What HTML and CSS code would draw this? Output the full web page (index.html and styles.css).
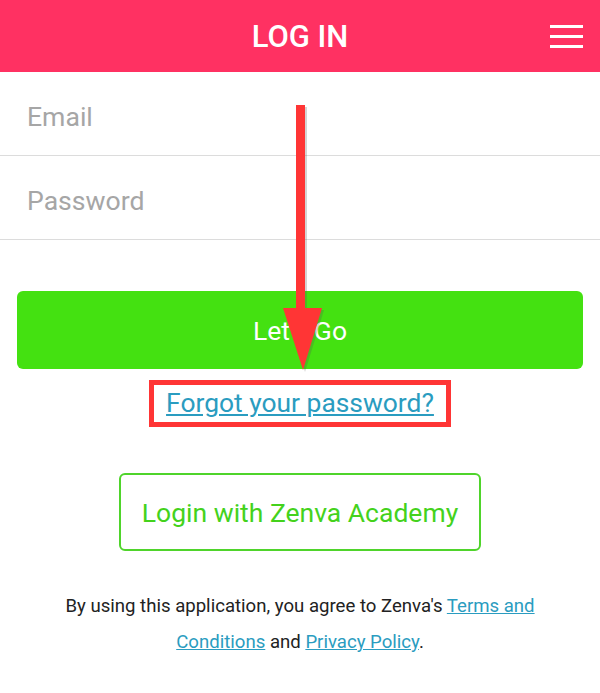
FILE: index.html
```html
<!DOCTYPE html>
<html lang="en">
<head>
  <meta charset="UTF-8" />
  <title>Log In</title>
  <link rel="stylesheet" href="styles.css">
</head>
<body>

<div id="topbar">
  <span></span>
  <h1>LOG IN</h1>
  <button class="menu" aria-label="menu">
    <svg width="33" height="23" viewBox="0 0 33 23">
      <rect x="0" y="0" width="33" height="3" fill="#fff"/>
      <rect x="0" y="10" width="33" height="3" fill="#fff"/>
      <rect x="0" y="20" width="33" height="3" fill="#fff"/>
    </svg>
  </button>
</div>

<form id="login">
  <input type="email" placeholder="Email">
  <input type="password" placeholder="Password">

  <button type="button" class="go">Let's Go</button>

  <div class="forgot">
    <a href="#">Forgot your password?</a>
  </div>

  <button type="button" class="zenva">Login with Zenva Academy</button>
</form>

<p class="terms">
  By using this application, you agree to Zenva's <a href="#">Terms and Conditions</a> and <a href="#">Privacy Policy</a>.
</p>

<!-- annotation arrow -->
<svg class="arrow" width="600" height="693" viewBox="0 0 600 693">
  <g opacity="0.25" transform="translate(2 2)">
    <rect x="296" y="105" width="9" height="210" fill="#555"/>
    <polygon points="283,308 322,308 303,370" fill="#555"/>
  </g>
  <rect x="296" y="105" width="9" height="210" fill="#ff3535"/>
  <polygon points="283,308 322,308 303,370" fill="#ff3535"/>
</svg>

</body>
</html>
```

FILE: styles.css
```css
body {
  margin: 0;
  font-family: Roboto, "Liberation Sans", sans-serif;
  background: #fff;
  color: #222;
  position: relative;
}

#topbar {
  background: #ff3162;
  height: 72px;
  display: grid;
  grid-template-columns: 1fr auto 1fr;
  align-items: center;
  padding: 0 17px;
}

#topbar h1 {
  margin: 0;
  color: #fff;
  font-size: 31px;
  font-weight: 500;
}

.menu {
  justify-self: end;
  border: none;
  background: none;
  padding: 0;
  display: flex;
  margin-top: 1px;
}

#login {
  display: flex;
  flex-direction: column;
  align-items: center;
}

#login input {
  width: 100%;
  box-sizing: border-box;
  height: 84px;
  border: none;
  border-bottom: 1px solid #dcdcdc;
  padding: 6px 27px 0;
  font-family: inherit;
  font-size: 26.6px;
  outline: none;
}

#login input::placeholder {
  color: #a6a6a6;
}

.go {
  margin-top: 51px;
  width: 566px;
  height: 78px;
  border: none;
  border-radius: 6px;
  background: #44e111;
  color: #fff;
  font-family: inherit;
  font-size: 26.5px;
}

.forgot {
  margin-top: 11px;
  border: 5px solid #ff3535;
  padding: 4px 12px 1px;
  line-height: 28px;
}

.forgot a,
.terms a {
  color: #2a9cc0;
}

.forgot a {
  font-size: 26.4px;
}

.zenva {
  margin-top: 46px;
  width: 362px;
  height: 78px;
  border: 2px solid #4fd42b;
  border-radius: 6px;
  background: #fff;
  color: #44d21c;
  font-family: inherit;
  font-size: 26.5px;
}

.terms {
  margin: 37px 0 0;
  padding: 0 45px;
  text-align: center;
  font-size: 18.6px;
  line-height: 36px;
}

.arrow {
  position: absolute;
  top: 0;
  left: 0;
  pointer-events: none;
}
```
